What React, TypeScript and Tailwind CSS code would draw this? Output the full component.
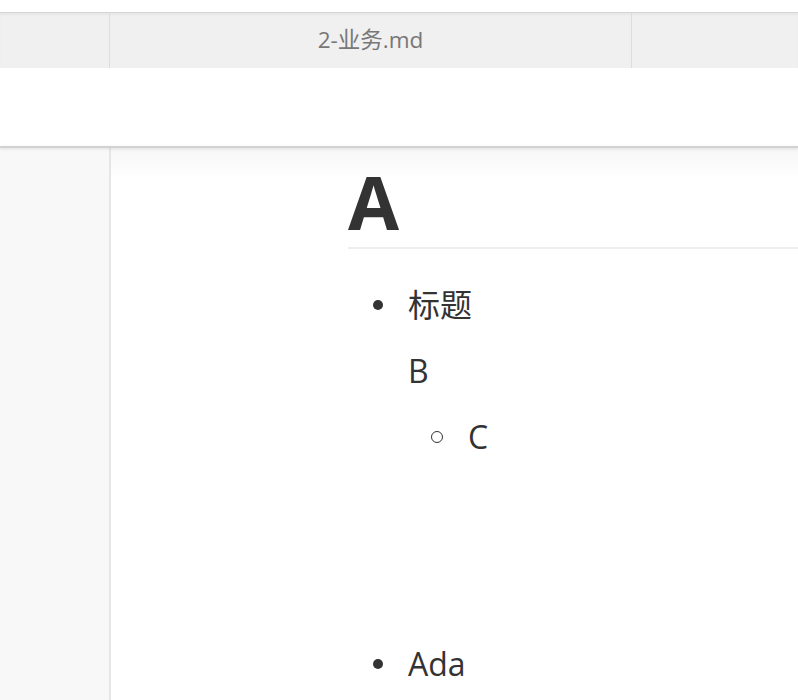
import React from "react";

export default function App() {
  const font = { fontFamily: '"Open Sans", "Noto Sans CJK SC", sans-serif' };
  return (
    <div className="w-[798px] h-[700px] overflow-hidden bg-white flex flex-col" style={font}>
      <div className="h-[12px] bg-white shrink-0" />
      <div className="h-[56px] shrink-0 flex bg-[#f0f0f0] border-t border-[#d6d6d6] shadow-[inset_0_2px_2px_rgba(0,0,0,0.04)]">
        <div className="w-[110px] border-r border-[#dddddd]" />
        <div className="w-[522px] border-r border-[#dddddd] flex items-center justify-center text-[22.5px] text-[#777777] pb-[2px]">
          2-业务.md
        </div>
        <div className="flex-1" />
      </div>
      <div className="h-[78px] shrink-0 bg-white" />
      <div className="h-[2px] shrink-0 bg-[#d2d2d2] shadow-[0_1px_3px_rgba(0,0,0,0.12)] z-10" />
      <div className="flex-1 flex min-h-0">
        <div className="w-[111px] shrink-0 bg-[#f8f8f8] border-r-2 border-[#e6e6e6]" />
        <div className="flex-1 relative bg-white overflow-hidden">
          <div className="absolute inset-x-0 top-0 h-[30px] bg-gradient-to-b from-[#f6f6f6] to-white" />
          <div className="relative ml-[237px] text-[#333333]">
            <h1 className="mt-[9px] text-[74px] leading-[90px] font-bold border-b-2 border-[#eeeeee] w-[600px]">
              A
            </h1>
            <div className="mt-[23px] text-[32px]">
              <div className="flex items-center h-[66px]">
                <span className="ml-[25px] w-[10px] h-[10px] rounded-full bg-[#333333]" />
                <span className="ml-[25px]">标题</span>
              </div>
              <div className="flex items-center h-[66px] pl-[60px]">B</div>
              <div className="flex items-center h-[66px]">
                <span className="ml-[83px] w-[12px] h-[12px] rounded-full border-[1.5px] border-[#333333]" />
                <span className="ml-[25px]">C</span>
              </div>
              <div className="h-[161px]" />
              <div className="flex items-center h-[66px]">
                <span className="ml-[25px] w-[10px] h-[10px] rounded-full bg-[#333333]" />
                <span className="ml-[25px]">Ada</span>
              </div>
            </div>
          </div>
        </div>
      </div>
    </div>
  );
}
